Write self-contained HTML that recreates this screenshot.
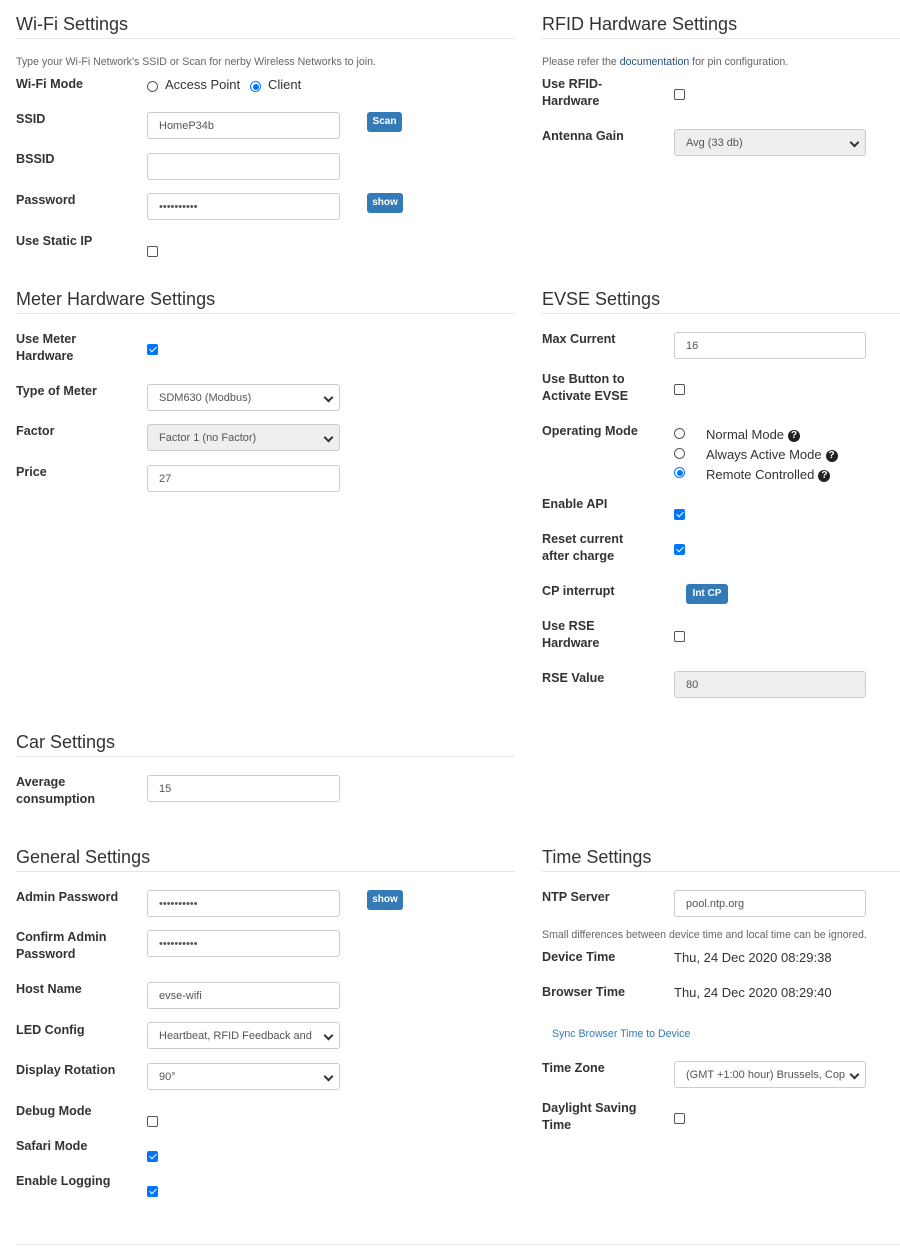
<!DOCTYPE html>
<html><head><meta charset="utf-8"><style>
body{margin:0;width:900px;height:1254px;background:#fff;font-family:"Liberation Sans",Arial,sans-serif;color:#333;position:relative;overflow:hidden}
.a{position:absolute}
h2{position:absolute;margin:0;font-weight:normal;font-size:18px;line-height:22px;color:#333}
.hr{position:absolute;height:1px;background:#e5e5e5}
.l{position:absolute;font-size:12.6px;font-weight:bold;line-height:17px;color:#333}
.i{position:absolute;box-sizing:border-box;width:193px;height:27px;border:1px solid #ccc;border-radius:3px;font-size:11px;line-height:27px;padding-left:11px;color:#555;background:#fff;white-space:nowrap;overflow:hidden}
.g{background:#eee}
.s:after{content:"";position:absolute;right:7px;top:9px;width:5px;height:5px;border-right:2px solid #333;border-bottom:2px solid #333;transform:rotate(45deg)}
.b{position:absolute;background:#337ab7;color:#fff;font-size:10px;font-weight:bold;border-radius:3px;line-height:20px;text-align:center;height:20px}
.c{position:absolute;box-sizing:border-box;width:11px;height:11px;border:1px solid #555;border-radius:2px;background:#fff}
.k{background:#0075ff;border-color:#0075ff}
.k:after{content:"";position:absolute;left:3px;top:0px;width:3px;height:6px;border-right:1.6px solid #fff;border-bottom:1.6px solid #fff;transform:rotate(45deg)}
.r{position:absolute;box-sizing:border-box;width:11px;height:11px;border:1px solid #555;border-radius:50%;background:#fff}
.rk{border:1px solid #0075ff}
.rk:after{content:"";position:absolute;left:1.5px;top:1.5px;width:6px;height:6px;border-radius:50%;background:#0075ff}
.t{position:absolute;font-size:13px;line-height:17px;color:#333}
.h{position:absolute;font-size:10.6px;line-height:14px;color:#666}
.q{display:inline-block;width:12px;height:12px;border-radius:50%;background:#222;color:#fff;font-size:10px;font-weight:bold;line-height:12px;text-align:center;vertical-align:1px;margin-left:4px}
</style></head><body>
<h2 style="left:16px;top:13px">Wi-Fi Settings</h2><div class="hr" style="left:16px;top:38px;width:499px"></div>
<div class="h" style="left:16px;top:55px">Type your Wi-Fi Network's SSID or Scan for nerby Wireless Networks to join.</div>
<div class="l" style="left:16px;top:76px">Wi-Fi Mode</div>
<div class="r" style="left:147px;top:81px"></div><div class="t" style="left:165px;top:76px">Access Point</div>
<div class="r rk" style="left:250px;top:81px"></div><div class="t" style="left:268px;top:76px">Client</div>
<div class="l" style="left:16px;top:111px">SSID</div><div class="i" style="left:147px;top:112px">HomeP34b</div><div class="b" style="left:367px;top:112px;width:35px">Scan</div>
<div class="l" style="left:16px;top:151px">BSSID</div><div class="i" style="left:147px;top:153px"></div>
<div class="l" style="left:16px;top:192px">Password</div><div class="i" style="left:147px;top:193px">••••••••••</div><div class="b" style="left:367px;top:193px;width:36px">show</div>
<div class="l" style="left:16px;top:233px">Use Static IP</div><div class="c" style="left:147px;top:246px"></div>
<h2 style="left:542px;top:13px">RFID Hardware Settings</h2><div class="hr" style="left:542px;top:38px;width:358px"></div>
<div class="h" style="left:542px;top:55px">Please refer the <span style="color:#23527c">documentation</span> for pin configuration.</div>
<div class="l" style="left:542px;top:76px">Use RFID-<br>Hardware</div><div class="c" style="left:674px;top:89px"></div>
<div class="l" style="left:542px;top:128px">Antenna Gain</div><div class="i g s" style="left:674px;top:129px;width:192px">Avg (33 db)</div>
<h2 style="left:16px;top:288px">Meter Hardware Settings</h2><div class="hr" style="left:16px;top:313px;width:499px"></div>
<div class="l" style="left:16px;top:331px">Use Meter<br>Hardware</div><div class="c k" style="left:147px;top:344px"></div>
<div class="l" style="left:16px;top:383px">Type of Meter</div><div class="i s" style="left:147px;top:384px">SDM630 (Modbus)</div>
<div class="l" style="left:16px;top:423px">Factor</div><div class="i g s" style="left:147px;top:424px">Factor 1 (no Factor)</div>
<div class="l" style="left:16px;top:464px">Price</div><div class="i" style="left:147px;top:465px">27</div>
<h2 style="left:542px;top:288px">EVSE Settings</h2><div class="hr" style="left:542px;top:313px;width:358px"></div>
<div class="l" style="left:542px;top:331px">Max Current</div><div class="i" style="left:674px;top:332px;width:192px">16</div>
<div class="l" style="left:542px;top:371px">Use Button to<br>Activate EVSE</div><div class="c" style="left:674px;top:384px"></div>
<div class="l" style="left:542px;top:423px">Operating Mode</div>
<div class="r" style="left:674px;top:428px"></div><div class="t" style="left:706px;top:426px">Normal Mode<span class="q">?</span></div>
<div class="r" style="left:674px;top:448px"></div><div class="t" style="left:706px;top:446px">Always Active Mode<span class="q">?</span></div>
<div class="r rk" style="left:674px;top:467px"></div><div class="t" style="left:706px;top:466px">Remote Controlled<span class="q">?</span></div>
<div class="l" style="left:542px;top:496px">Enable API</div><div class="c k" style="left:674px;top:509px"></div>
<div class="l" style="left:542px;top:531px">Reset current<br>after charge</div><div class="c k" style="left:674px;top:544px"></div>
<div class="l" style="left:542px;top:583px">CP interrupt</div><div class="b" style="left:686px;top:584px;width:42px">Int CP</div>
<div class="l" style="left:542px;top:618px">Use RSE<br>Hardware</div><div class="c" style="left:674px;top:631px"></div>
<div class="l" style="left:542px;top:670px">RSE Value</div><div class="i g" style="left:674px;top:671px;width:192px">80</div>
<h2 style="left:16px;top:731px">Car Settings</h2><div class="hr" style="left:16px;top:756px;width:499px"></div>
<div class="l" style="left:16px;top:774px">Average<br>consumption</div><div class="i" style="left:147px;top:775px">15</div>
<h2 style="left:16px;top:846px">General Settings</h2><div class="hr" style="left:16px;top:871px;width:499px"></div>
<div class="l" style="left:16px;top:889px">Admin Password</div><div class="i" style="left:147px;top:890px">••••••••••</div><div class="b" style="left:367px;top:890px;width:36px">show</div>
<div class="l" style="left:16px;top:929px">Confirm Admin<br>Password</div><div class="i" style="left:147px;top:930px">••••••••••</div>
<div class="l" style="left:16px;top:981px">Host Name</div><div class="i" style="left:147px;top:982px">evse-wifi</div>
<div class="l" style="left:16px;top:1022px">LED Config</div><div class="i s" style="left:147px;top:1022px">Heartbeat, RFID Feedback and</div>
<div class="l" style="left:16px;top:1062px">Display Rotation</div><div class="i s" style="left:147px;top:1063px">90°</div>
<div class="l" style="left:16px;top:1103px">Debug Mode</div><div class="c" style="left:147px;top:1116px"></div>
<div class="l" style="left:16px;top:1138px">Safari Mode</div><div class="c k" style="left:147px;top:1151px"></div>
<div class="l" style="left:16px;top:1173px">Enable Logging</div><div class="c k" style="left:147px;top:1186px"></div>
<h2 style="left:542px;top:846px">Time Settings</h2><div class="hr" style="left:542px;top:871px;width:358px"></div>
<div class="l" style="left:542px;top:889px">NTP Server</div><div class="i" style="left:674px;top:890px;width:192px">pool.ntp.org</div>
<div class="h" style="left:542px;top:928px">Small differences between device time and local time can be ignored.</div>
<div class="l" style="left:542px;top:949px">Device Time</div><div class="t" style="left:674px;top:949px">Thu, 24 Dec 2020 08:29:38</div>
<div class="l" style="left:542px;top:984px">Browser Time</div><div class="t" style="left:674px;top:984px">Thu, 24 Dec 2020 08:29:40</div>
<div class="a" style="left:552px;top:1027px;font-size:10.6px;line-height:14px;color:#337ab7">Sync Browser Time to Device</div>
<div class="l" style="left:542px;top:1060px">Time Zone</div><div class="i s" style="left:674px;top:1061px;width:192px">(GMT +1:00 hour) Brussels, Cop</div>
<div class="l" style="left:542px;top:1100px">Daylight Saving<br>Time</div><div class="c" style="left:674px;top:1113px"></div>
<div class="hr" style="left:16px;top:1244px;width:884px"></div>
</body></html>
